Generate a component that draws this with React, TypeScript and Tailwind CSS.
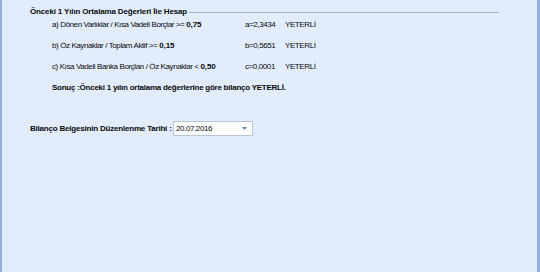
import React from "react";

const rows = [
  { label: "a) Dönen Varlıklar / Kısa Vadeli Borçlar >= ", limit: "0,75", value: "a=2,3434" },
  { label: "b) Öz Kaynaklar  / Toplam Aktif >= ", limit: "0,15", value: "b=0,5651" },
  { label: "c) Kısa Vadeli Banka Borçları / Öz Kaynaklar  <  ", limit: "0,50", value: "c=0,0001" },
];

export default function App() {
  return (
    <div
      className="w-[540px] h-[272px] bg-[#e1edfd] border-l-2 border-r-[3px] border-[#8fb1dc] text-[8px] tracking-[-0.4px] text-[#0a0a0a] overflow-hidden"
      style={{ fontFamily: '"Liberation Sans", "DejaVu Sans", sans-serif' }}
    >
      {/* GROUP */}
      <div className="pl-[28px] pt-[6px]">
        <div className="flex items-center h-[12px]">
          <span className="font-bold whitespace-nowrap tracking-[-0.15px]">Önceki 1 Yılın Ortalama Değerleri İle Hesap</span>
          <div className="ml-[2px] w-[310px] h-px bg-[#a9b3bf]" />
        </div>

        <div className="pl-[22px] pt-px space-y-[9px]">
          {rows.map((r) => (
            <div key={r.value} className="flex items-center h-[12px] whitespace-nowrap">
              <div className="w-[193px]">
                {r.label}
                <span className="font-bold tracking-[-0.1px]">{r.limit}</span>
              </div>
              <div className="w-[40px]">{r.value}</div>
              <div>YETERLİ</div>
            </div>
          ))}
          <div className="h-[12px] flex items-center font-bold whitespace-nowrap tracking-[-0.25px]">
            Sonuç :Önceki 1 yılın ortalama değerlerine göre bilanço YETERLİ.
          </div>
        </div>
      </div>

      {/* DATE */}
      <div className="flex items-center pl-[28px] mt-[27px]">
        <span className="w-[143px] font-bold whitespace-nowrap tracking-[-0.2px]">Bilanço Belgesinin Düzenlenme Tarihi :</span>
        <div className="w-[80px] h-[15px] bg-white border border-[#b9c6d6] flex items-center justify-between pl-[2px] pr-[5px]">
          <span>20.07.2016</span>
          <svg width="5" height="3" viewBox="0 0 5 3">
            <path d="M0 0H5L2.5 3Z" fill="#6d83a3" />
          </svg>
        </div>
      </div>
    </div>
  );
}
